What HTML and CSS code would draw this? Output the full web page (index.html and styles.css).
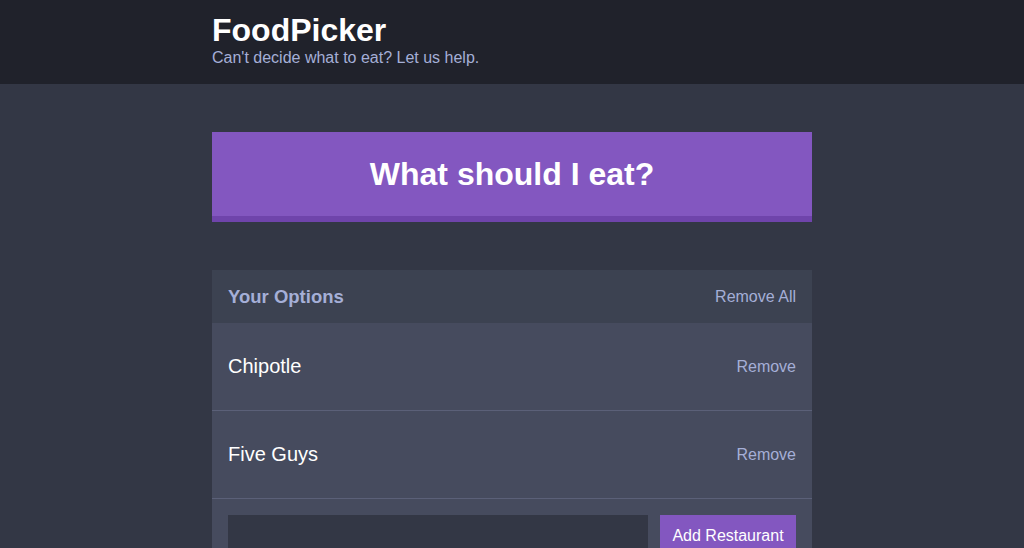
FILE: index.html
```html
<!DOCTYPE html>
<html>
<head>
<meta charset="utf-8">
<title>FoodPicker</title>
<link rel="stylesheet" href="styles.css">
</head>
<body>
<header class="header">
  <div class="container">
    <h1 class="header__title">FoodPicker</h1>
    <h2 class="header__subtitle">Can't decide what to eat? Let us help.</h2>
  </div>
</header>
<main class="container">
  <button class="big-button">What should I eat?</button>
  <section class="widget">
    <div class="widget-header">
      <h3 class="widget-header__title">Your Options</h3>
      <button class="button-link">Remove All</button>
    </div>
    <div class="option">
      <p class="option__text">Chipotle</p>
      <button class="button-link">Remove</button>
    </div>
    <div class="option">
      <p class="option__text">Five Guys</p>
      <button class="button-link">Remove</button>
    </div>
    <form class="add-option">
      <input class="add-option__input" type="text" name="option">
      <button class="button" type="button">Add Restaurant</button>
    </form>
  </section>
</main>
</body>
</html>
```

FILE: styles.css
```css
* { box-sizing: border-box; }
html, body { margin: 0; padding: 0; }
body {
  background: #333745;
  font-family: "Liberation Sans", Arial, Helvetica, sans-serif;
  color: #ffffff;
  overflow: hidden;
}
.container {
  width: 600px;
  margin: 0 auto;
}
.header {
  background: #20222b;
  padding: 12px 0 18px;
}
.header__title {
  margin: 0;
  font-size: 32px;
  line-height: 37px;
  font-weight: bold;
  color: #ffffff;
}
.header__subtitle {
  margin: 0;
  font-size: 16px;
  line-height: 17px;
  font-weight: normal;
  color: #a5afd7;
}
main.container {
  padding-top: 48px;
}
.big-button {
  display: block;
  width: 100%;
  height: 90px;
  margin: 0 0 48px;
  border: none;
  border-bottom: 6px solid #6f44ab;
  background: #8357c0;
  color: #ffffff;
  font-family: inherit;
  font-size: 32px;
  font-weight: bold;
  padding: 0;
  cursor: pointer;
}
.widget {
  background: #464b5e;
}
.widget-header {
  display: flex;
  justify-content: space-between;
  align-items: center;
  background: #3c4251;
  height: 53px;
  padding: 0 16px;
}
.widget-header__title {
  margin: 0;
  font-size: 18.5px;
  font-weight: bold;
  color: #a5afd7;
}
.button-link {
  background: none;
  border: none;
  padding: 0;
  font-family: inherit;
  font-size: 16px;
  color: #a5afd7;
  cursor: pointer;
}
.option {
  display: flex;
  justify-content: space-between;
  align-items: center;
  height: 88px;
  padding: 0 16px;
  border-bottom: 1px solid #5b6078;
}
.option__text {
  margin: 0;
  font-size: 20px;
  color: #ffffff;
}
.add-option {
  display: flex;
  gap: 12px;
  padding: 16px;
}
.add-option__input {
  flex: 1 1 auto;
  min-width: 0;
  height: 44px;
  background: #333745;
  border: none;
  border-bottom: 2px solid #2c303c;
  color: #a5afd7;
  font-size: 16px;
  padding: 0 12px;
}
.button {
  flex: 0 0 136px;
  background: #8357c0;
  border: none;
  border-bottom: 3px solid #6f44ab;
  color: #ffffff;
  font-family: inherit;
  font-size: 16px;
  padding: 0;
  height: 44px;
  cursor: pointer;
}
```
